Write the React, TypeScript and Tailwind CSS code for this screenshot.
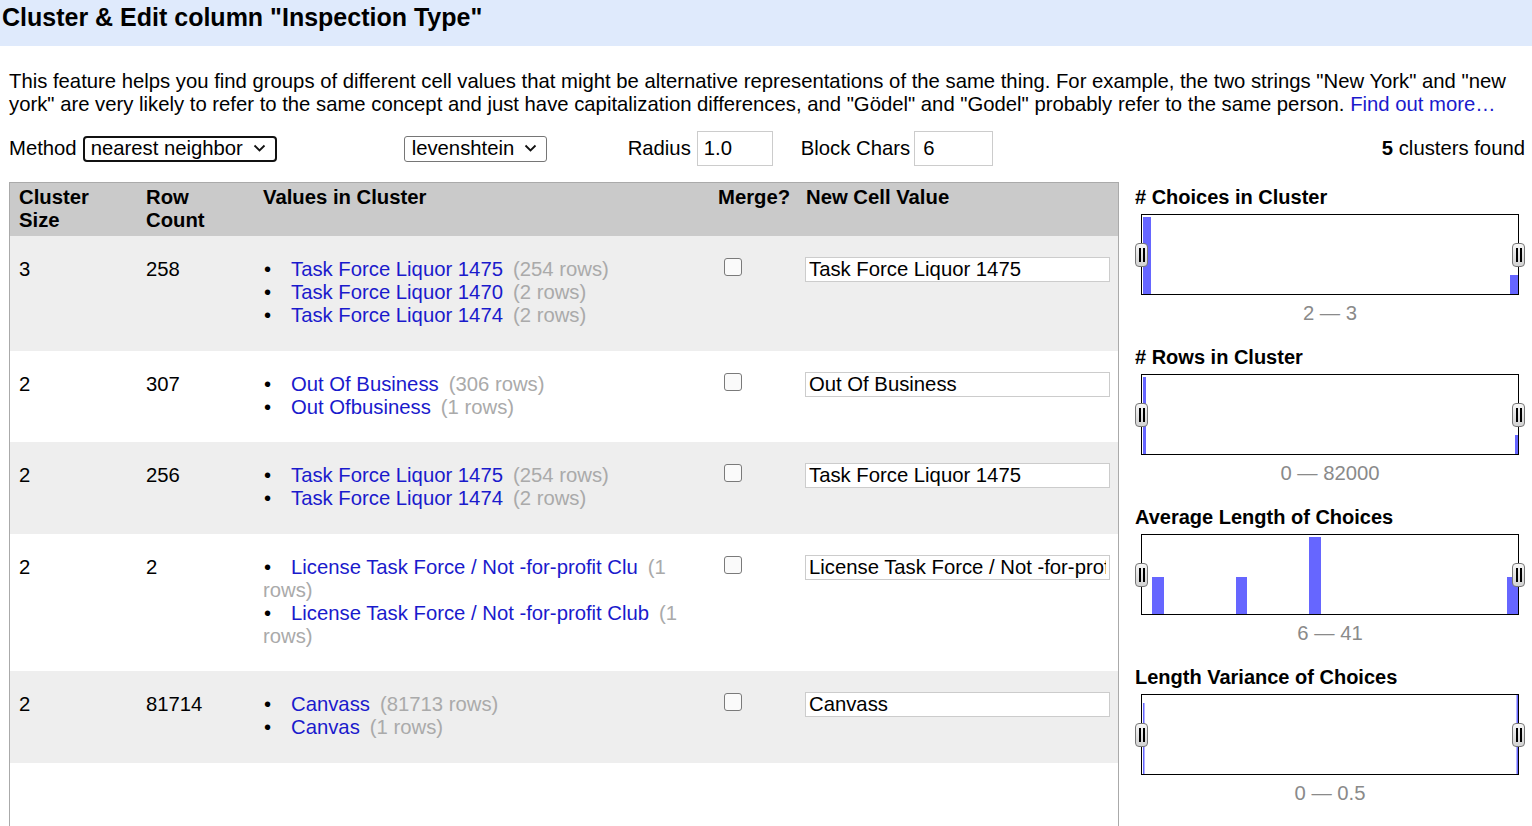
import React from 'react';

type Choice = { value: string; rows: number };
type Cluster = { size: number; rowCount: number; choices: Choice[]; newValue: string };

const clusters: Cluster[] = [
  {
    size: 3,
    rowCount: 258,
    choices: [
      { value: 'Task Force Liquor 1475', rows: 254 },
      { value: 'Task Force Liquor 1470', rows: 2 },
      { value: 'Task Force Liquor 1474', rows: 2 },
    ],
    newValue: 'Task Force Liquor 1475',
  },
  {
    size: 2,
    rowCount: 307,
    choices: [
      { value: 'Out Of Business', rows: 306 },
      { value: 'Out Ofbusiness', rows: 1 },
    ],
    newValue: 'Out Of Business',
  },
  {
    size: 2,
    rowCount: 256,
    choices: [
      { value: 'Task Force Liquor 1475', rows: 254 },
      { value: 'Task Force Liquor 1474', rows: 2 },
    ],
    newValue: 'Task Force Liquor 1475',
  },
  {
    size: 2,
    rowCount: 2,
    choices: [
      { value: 'License Task Force / Not -for-profit Clu', rows: 1 },
      { value: 'License Task Force / Not -for-profit Club', rows: 1 },
    ],
    newValue: 'License Task Force / Not -for-profit Club',
  },
  {
    size: 2,
    rowCount: 81714,
    choices: [
      { value: 'Canvass', rows: 81713 },
      { value: 'Canvas', rows: 1 },
    ],
    newValue: 'Canvass',
  },
];

type Bar = { x: number; w: number; y: number };

const histograms: { title: string; range: string; bars: Bar[] }[] = [
  {
    title: '# Choices in Cluster',
    range: '2 — 3',
    bars: [
      { x: 1, w: 8, y: 2 },
      { x: 368, w: 8, y: 60 },
    ],
  },
  {
    title: '# Rows in Cluster',
    range: '0 — 82000',
    bars: [
      { x: 1, w: 3, y: 2 },
      { x: 373, w: 3, y: 60 },
    ],
  },
  {
    title: 'Average Length of Choices',
    range: '6 — 41',
    bars: [
      { x: 10, w: 12, y: 42 },
      { x: 94, w: 11, y: 42 },
      { x: 167, w: 12, y: 2 },
      { x: 365, w: 11, y: 42 },
    ],
  },
  {
    title: 'Length Variance of Choices',
    range: '0 — 0.5',
    bars: [
      { x: 1, w: 1.5, y: 8 },
      { x: 374.5, w: 1.5, y: 0 },
    ],
  },
];

function Chevron() {
  return (
    <svg width="13" height="9" viewBox="0 0 13 9" fill="none" stroke="#111" strokeWidth="1.8">
      <path d="M1.5 1.5l5 5 5-5" />
    </svg>
  );
}

function Handle({ side }: { side: 'left' | 'right' }) {
  return (
    <div
      className={
        side === 'left'
          ? 'absolute left-[-7px] top-[28px] flex h-[24px] w-[13px] items-center justify-center gap-[2px] rounded-[4px] border border-[#777] bg-gradient-to-b from-[#f6f6f6] to-[#d2d2d2]'
          : 'absolute right-[-7px] top-[28px] flex h-[24px] w-[13px] items-center justify-center gap-[2px] rounded-[4px] border border-[#777] bg-gradient-to-b from-[#f6f6f6] to-[#d2d2d2]'
      }
    >
      <span className="h-[14px] w-[2px] bg-black" />
      <span className="h-[14px] w-[2px] bg-black" />
    </div>
  );
}

function Histogram({ title, range, bars }: { title: string; range: string; bars: Bar[] }) {
  return (
    <div className="pb-[20px]">
      <h3 className="text-[20px] font-bold leading-[24px] text-black">{title}</h3>
      <div className="relative ml-[6px] mt-[5px] h-[81px] w-[378px] border border-black bg-white">
        <svg width="376" height="79" viewBox="0 0 376 79" className="block">
          {bars.map((b, i) => (
            <rect key={i} x={b.x} y={b.y} width={b.w} height={79 - b.y} fill="#6666ff" />
          ))}
        </svg>
        <Handle side="left" />
        <Handle side="right" />
      </div>
      <div className="ml-[6px] mt-[7px] w-[378px] text-center leading-[23px] text-[#8a8a8a]">{range}</div>
    </div>
  );
}

function ClusterRow({ cluster, shaded }: { cluster: Cluster; shaded: boolean }) {
  return (
    <div
      className={
        shaded
          ? 'grid grid-cols-[127px_117px_455px_88px_321px] bg-[#eeeeee] pb-[23.5px] pt-[22px]'
          : 'grid grid-cols-[127px_117px_455px_88px_321px] bg-white pb-[23.5px] pt-[22px]'
      }
    >
      <div className="pl-[9px]">{cluster.size}</div>
      <div className="pl-[9px]">{cluster.rowCount}</div>
      <ul className="pl-[9px] pr-[9px]">
        {cluster.choices.map((c, i) => (
          <li key={i}>
            <span className="inline-block w-[28px] pl-[1px]">•</span>
            <a className="text-[#1a1acc]">{c.value}</a>
            <span className="ml-[10px] text-[#aaaaaa]">({c.rows} rows)</span>
          </li>
        ))}
      </ul>
      <div className="pl-[15px]">
        <input
          type="checkbox"
          className="m-0 block h-[18px] w-[18px] appearance-none rounded-[3px] border-[1.5px] border-[#7a7a7a] bg-[#fafafa]"
        />
      </div>
      <div className="px-[8px]">
        <input
          type="text"
          defaultValue={cluster.newValue}
          className="-mt-[1px] block h-[25px] w-full border border-[#cccccc] bg-white px-[3px] text-[20.3px] leading-[23px] text-black outline-none"
        />
      </div>
    </div>
  );
}

export default function App() {
  return (
    <div className="flex h-[826px] flex-col overflow-hidden bg-white font-['Liberation_Sans',Arial,sans-serif] text-[20.3px] leading-[23px] text-black">
      <div className="flex h-[46px] shrink-0 items-start bg-[#dfeafc] pl-[2px] pt-[3px]">
        <h1 className="text-[25px] font-bold leading-[28px]">Cluster &amp; Edit column "Inspection Type"</h1>
      </div>

      <p className="mt-[24px] pl-[9px] pr-[6px]">
        This feature helps you find groups of different cell values that might be alternative representations of the same thing. For example, the two strings "New York" and "new york" are very likely to refer to the same concept and just have capitalization differences, and "Gödel" and "Godel" probably refer to the same person.{' '}
        <a className="text-[#1a1acc]">Find out more…</a>
      </p>

      <div className="mt-[15px] flex h-[35px] items-center pl-[9px] pr-[7px]">
        <span>Method</span>
        <div className="ml-[6px] flex h-[26px] w-[194px] items-center justify-between rounded-[4px] border-2 border-[#111] pl-[6px] pr-[9px]">
          <span>nearest neighbor</span>
          <Chevron />
        </div>
        <div className="ml-[127px] flex h-[26px] w-[143px] items-center justify-between rounded-[3px] border border-[#767676] pl-[7px] pr-[9px]">
          <span>levenshtein</span>
          <Chevron />
        </div>
        <span className="ml-[81px]">Radius</span>
        <div className="ml-[6px] flex h-[35px] w-[76px] items-center border border-[#cccccc] pl-[6px]">1.0</div>
        <span className="ml-[28px]">Block Chars</span>
        <div className="ml-[4px] flex h-[35px] w-[79px] items-center border border-[#cccccc] pl-[8px]">6</div>
        <span className="ml-auto">
          <b>5</b> clusters found
        </span>
      </div>

      <div className="mt-[16px] flex min-h-0 flex-1 pl-[9px]">
        <div className="w-[1110px] shrink-0 border-l border-r border-t border-[#aaaaaa]">
          <div className="grid grid-cols-[127px_117px_455px_88px_321px] bg-[#cacaca] pb-[4px] pt-[3px] font-bold">
            <div className="pl-[9px]">
              Cluster
              <br />
              Size
            </div>
            <div className="pl-[9px]">
              Row
              <br />
              Count
            </div>
            <div className="pl-[9px]">Values in Cluster</div>
            <div className="pl-[9px]">Merge?</div>
            <div className="pl-[9px]">New Cell Value</div>
          </div>
          {clusters.map((c, i) => (
            <ClusterRow key={i} cluster={c} shaded={i % 2 === 0} />
          ))}
        </div>

        <div className="flex-1 pl-[16px] pt-[3px]">
          {histograms.map((h) => (
            <Histogram key={h.title} title={h.title} range={h.range} bars={h.bars} />
          ))}
        </div>
      </div>
    </div>
  );
}
